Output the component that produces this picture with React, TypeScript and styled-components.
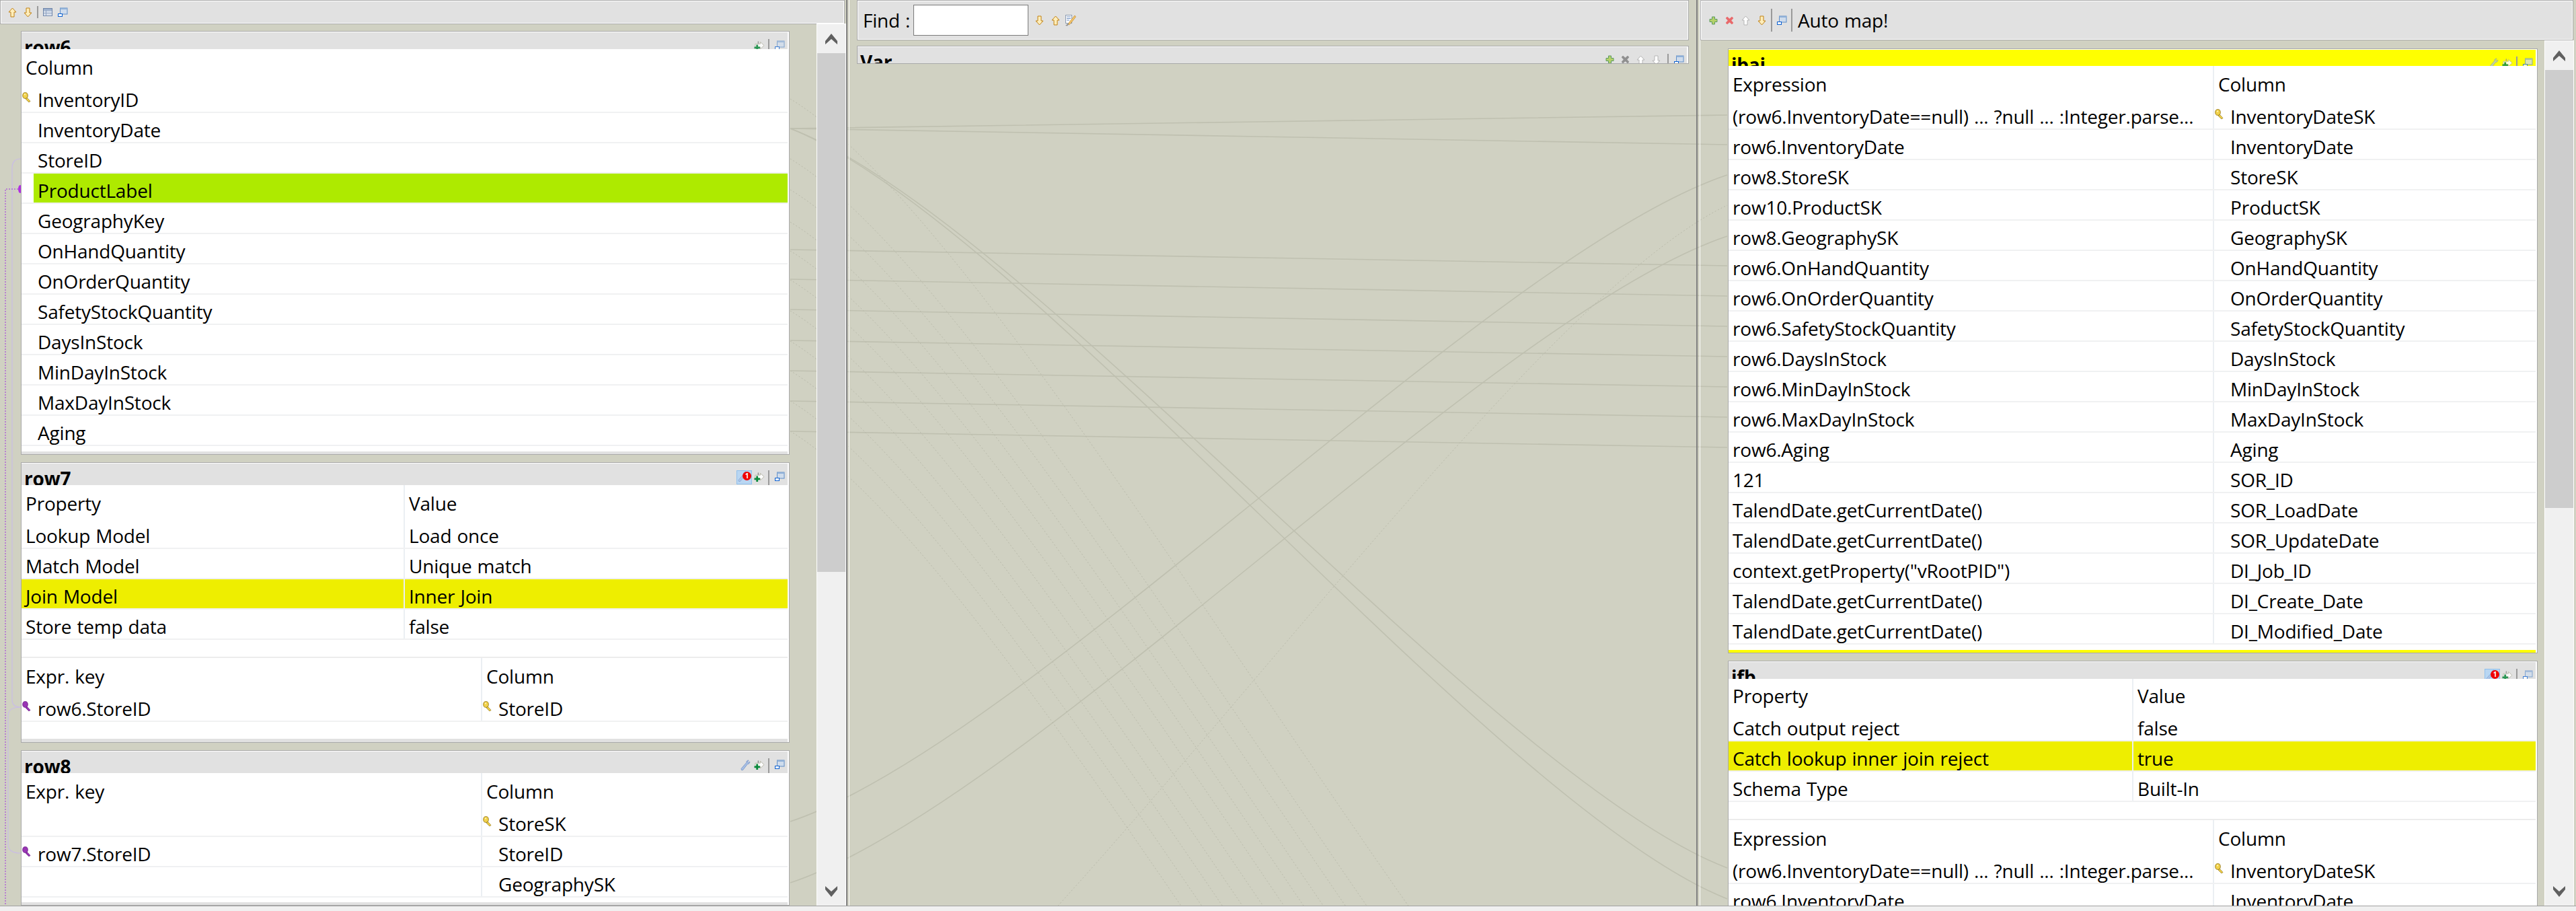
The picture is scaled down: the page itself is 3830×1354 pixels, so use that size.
import { Fragment, ReactNode } from 'react';
import styled, { createGlobalStyle } from 'styled-components';

const GlobalStyle = createGlobalStyle`
  html, body { margin: 0; padding: 0; background: #f0f0f0; }
  * { box-sizing: border-box; }
  body { font-family: "Open Sans", "Noto Sans", sans-serif; color: #000; }
`;

const Root = styled.div`
  width: 3830px;
  height: 1354px;
  overflow: hidden;
  background: #f0f0f0;
`;

const Workspace = styled.div`
  position: relative;
  display: flex;
  width: 100%;
  height: 1347px;
  overflow: hidden;
  background: #d0d1c2;
  border-bottom: 1px solid #a0a0a0;
`;

const Links = styled.svg`
  position: absolute;
  top: 0;
  left: 0;
  z-index: 0;
`;

const Pane = styled.div<{ $w: number }>`
  position: relative;
  z-index: 1;
  display: flex;
  flex-direction: column;
  flex: none;
  width: ${(p) => p.$w}px;
  height: 100%;
  overflow: hidden;
`;

const Sash = styled.div<{ $w: number }>`
  position: relative;
  z-index: 1;
  flex: none;
  width: ${(p) => p.$w}px;
  border-left: 2px solid #808080;
  border-right: 1px solid #fff;
`;

const Toolbar = styled.div<{ $h: number; $mr?: number }>`
  display: flex;
  flex: none;
  align-items: center;
  height: ${(p) => p.$h}px;
  margin-right: ${(p) => p.$mr ?? 0}px;
  padding-left: 6px;
  background: #e1e1e1;
  border: 1px solid #a9a9a9;
  box-shadow: inset 0 0 0 1px #fff;
`;

const ToolButton = styled.span<{ $w?: number }>`
  display: flex;
  flex: none;
  align-items: center;
  justify-content: center;
  width: ${(p) => p.$w ?? 24}px;
`;

const Divider = styled.span<{ $h?: number }>`
  flex: none;
  width: 2px;
  height: ${(p) => p.$h ?? 34}px;
  margin: 0 2px;
  background: #9a9a9a;
`;

const ToolLabel = styled.span`
  margin-left: 6px;
  font-size: 28px;
  letter-spacing: -0.2px;
  word-spacing: 1px;
  white-space: nowrap;
`;

const FindLabel = styled(ToolLabel)`
  width: 75px;
  margin-left: 2px;
`;

const FindInput = styled.input`
  flex: none;
  width: 171px;
  height: 46px;
  margin-right: 4px;
  background: #fff;
  border: 1px solid #7a7a7a;
  outline: none;
`;

const Body = styled.div<{ $mr?: number; $mt?: number }>`
  display: flex;
  flex: 1;
  min-height: 0;
  margin-top: ${(p) => p.$mt ?? 0}px;
  margin-right: ${(p) => p.$mr ?? 0}px;
`;

const Stack = styled.div<{ $pl: number; $pt: number; $w: number }>`
  display: flex;
  flex: none;
  flex-direction: column;
  gap: 11px;
  width: ${(p) => p.$w}px;
  padding: ${(p) => p.$pt}px 0 0 ${(p) => p.$pl}px;
  overflow: hidden;
`;

const Panel = styled.section<{ $w: string }>`
  flex: none;
  width: ${(p) => p.$w};
  padding: 1px 2px 0 0;
  background: #fff;
  border: 1px solid #a9a9a9;
`;

const PanelHead = styled.header<{ $h: number; $bg?: string }>`
  display: flex;
  justify-content: space-between;
  height: ${(p) => p.$h}px;
  overflow: hidden;
  background: ${(p) => p.$bg ?? '#e1e1e1'};
`;

const PanelTitle = styled.h3`
  margin: 0;
  padding: 6px 0 0 4px;
  font-size: 28px;
  font-weight: 700;
  line-height: 32px;
  letter-spacing: -0.2px;
`;

const HeadTools = styled.div`
  display: flex;
  flex: none;
  align-items: flex-start;
  height: 40px;
  padding: 10px 4px 0 0;
`;

const HeadSlot = styled.span<{ $w?: number }>`
  display: flex;
  flex: none;
  justify-content: center;
  width: ${(p) => p.$w ?? 22}px;
  padding-top: 2px;
`;

const HeadRule = styled.span`
  flex: none;
  width: 2px;
  height: 24px;
  margin: 0 8px 0 5px;
  background: #9a9a9a;
`;

const IssueBox = styled.span`
  position: relative;
  display: block;
  flex: none;
  width: 23px;
  height: 21px;
  margin-right: 3px;
  background: #b9d6f2;
  border: 1px solid #90c0ec;
`;

const IssueCount = styled.span`
  position: absolute;
  top: 1px;
  right: 0;
  width: 13px;
  height: 13px;
  font-size: 10px;
  font-weight: 700;
  line-height: 13px;
  text-align: center;
  color: #fff;
  background: #f00000;
  border-radius: 50%;
`;

const Row = styled.div<{ $cols: string; $h?: number; $head?: boolean }>`
  display: grid;
  grid-template-columns: ${(p) => p.$cols};
  height: ${(p) => p.$h ?? 45}px;
  border-bottom: ${(p) => (p.$head ? 'none' : '2px solid #f0f1f2')};
`;

const Cell = styled.div<{ $split?: boolean }>`
  display: flex;
  min-width: 0;
  border-left: ${(p) => (p.$split ? '2px solid #ebeff3' : 'none')};
`;

const KeySlot = styled.span`
  display: flex;
  flex: none;
  align-items: center;
  width: 18px;
  padding-left: 1px;
`;

const CellText = styled.span<{ $fill?: string; $pt: number }>`
  flex: 1;
  min-width: 0;
  padding: ${(p) => p.$pt}px 0 0 6px;
  font-size: 28px;
  line-height: 35px;
  letter-spacing: -0.2px;
  word-spacing: 1px;
  white-space: nowrap;
  overflow: hidden;
  background: ${(p) => p.$fill ?? 'transparent'};
`;

const Spacer = styled.div<{ $h: number }>`
  height: ${(p) => p.$h}px;
`;

const Band = styled.div<{ $h: number; $bg?: string }>`
  height: ${(p) => p.$h}px;
  background: ${(p) => p.$bg ?? '#e1e1e1'};
`;

const Track = styled.div`
  display: flex;
  flex: none;
  flex-direction: column;
  width: 42px;
  margin-left: 1px;
  background: #f0f0f0;
  box-shadow: 0 0 0 1px #fff;
`;

const TrackButton = styled.div`
  display: flex;
  flex: none;
  align-items: center;
  justify-content: center;
  height: 43px;
`;

const Thumb = styled.div<{ $h: number }>`
  flex: none;
  height: ${(p) => p.$h}px;
  background: #cdcdcd;
`;

const TrackRest = styled.div`
  flex: 1;
`;

const Middle = styled.div`
  display: flex;
  flex-direction: column;
  gap: 8px;
  padding: 0 11px;
`;

/* ---------- icons ---------- */

const tones = {
  orange: { fill: '#ffeebb', line: '#c08010' },
  pale: { fill: '#ffffff', line: '#b4b4b4' },
};

type Tone = keyof typeof tones;

const ArrowUp = ({ tone = 'orange' }: { tone?: Tone }) => (
  <svg width="13" height="15" viewBox="0 0 13 15">
    <path d="M6.5 1 12 7H9v7H4V7H1z" fill={tones[tone].fill} stroke={tones[tone].line} />
  </svg>
);

const ArrowDown = ({ tone = 'orange' }: { tone?: Tone }) => (
  <svg width="13" height="15" viewBox="0 0 13 15">
    <path d="M4 1h5v7h3l-5.500 6L1 8h3z" fill={tones[tone].fill} stroke={tones[tone].line} />
  </svg>
);

const Plus = () => (
  <svg width="13" height="13" viewBox="0 0 13 13">
    <path d="M4.500 1h4v3.500h3.500v4H8.500V12h-4V8.500H1v-4h3.500z" fill="#b5d168" stroke="#5d9a63" />
  </svg>
);

const Cross = ({ color = '#e9686a' }: { color?: string }) => (
  <svg width="13" height="13" viewBox="0 0 13 13">
    <path d="M1 3l2-2 3.500 3L10 1l2 2-3 3.500 3 3.500-2 2-3.500-3L3 12l-2-2 3-3.500z" fill={color} stroke={color} strokeWidth="0.6" />
  </svg>
);

const WindowIcon = ({ dim }: { dim?: boolean }) => (
  <svg width="15" height="14" viewBox="0 0 15 14" opacity={dim ? 0.75 : 1}>
    <rect x="3.500" y="1" width="10.500" height="9" fill="#cfdcec" stroke="#5f8ec8" />
    <rect x="3.500" y="1" width="10.500" height="2" fill="#8fb0d8" />
    <rect x="0.500" y="9.500" width="6" height="4" fill="#fff" stroke="#0b5fd0" />
  </svg>
);

const TableIcon = () => (
  <svg width="14" height="12" viewBox="0 0 14 12">
    <rect x="0.500" y="0.500" width="13" height="11" fill="#e8edf5" stroke="#6d84a8" />
    <path d="M1 3.500h12M1 6h12M1 8.500h12M4.500 3.500v8" stroke="#8fa3c2" fill="none" />
    <rect x="1" y="1" width="12" height="2" fill="#9fb2cf" />
  </svg>
);

const FindIcon = () => (
  <svg width="17" height="17" viewBox="0 0 17 17">
    <rect x="1.500" y="0.500" width="9" height="12" fill="#fff" stroke="#8a9ab0" />
    <path d="M3 3h6M3 5.500h6M3 8h4" stroke="#6f8fc0" />
    <path d="M15 1l1.500 2-7 9-3 3-1.500-1 2.500-4z" fill="#f3c46a" stroke="#c08a30" strokeWidth="0.7" />
    <path d="M1 16l4-3 1 1-2 2.500z" fill="#8a8a8a" />
  </svg>
);

const Wrench = ({ dim }: { dim?: boolean }) => (
  <svg width="16" height="17" viewBox="0 0 16 17" opacity={dim ? 0.7 : 1}>
    <path d="M13 1c-2 0-3.500 1.500-3.200 3.500L2 13.500 2.500 15.500 4.500 15.500 11.500 6.500C13.500 6.800 15 5 14.800 3L12.800 4.700 11.500 3.500z" fill="#a9c0e4" stroke="#6f8fc8" strokeWidth="0.8" />
  </svg>
);

const AddArrow = ({ dim }: { dim?: boolean }) => (
  <svg width="17" height="17" viewBox="0 0 17 17" opacity={dim ? 0.85 : 1}>
    <path d="M6 1h1.500v4H6z" fill="#8f8f8f" />
    <path d="M2 5h8V2l6 5.500-6 5.500V10H2z" fill="#fff" stroke="#b4b4a4" />
    <path d="M3.500 6.500h3v3h3v3h-3v3h-3v-3h-3v-3h3z" fill="#0b8a3c" />
  </svg>
);

const Key = ({ color = 'gold' }: { color?: 'gold' | 'purple' }) => {
  const fill = color === 'gold' ? '#f2d24a' : '#9a35b5';
  const line = color === 'gold' ? '#8a6d10' : '#6a1f85';
  return (
    <svg width="15" height="15" viewBox="0 0 15 15">
      <path d="M5 10l5 5 2-1.500L7 8z" fill={fill} stroke={line} strokeWidth="0.7" />
      <ellipse cx="4.500" cy="5" rx="3.800" ry="4.400" fill={fill} stroke={line} strokeWidth="0.8" />
      {color === 'gold' && <circle cx="4" cy="3.500" r="1" fill="#fff8d0" />}
    </svg>
  );
};

const Chevron = ({ down }: { down?: boolean }) => (
  <svg width="18" height="16" viewBox="0 0 18 16">
    <path d={down ? 'M0 0l9 8 9-8v5L9 16 0 5z' : 'M9 0l9 11v5L9 8l-9 8v-5z'} fill="#606060" />
  </svg>
);

/* ---------- tables ---------- */

type CellData = { text: string; key?: 'gold' | 'purple'; slot?: boolean };
type RowData = { cells: CellData[]; fill?: string };

const GREEN = '#aeea00';
const YELLOW = '#eeee00';

const c = (text: string): CellData => ({ text });
const s = (text: string): CellData => ({ text, slot: true });
const gold = (text: string): CellData => ({ text, slot: true, key: 'gold' });
const purple = (text: string): CellData => ({ text, slot: true, key: 'purple' });

const DataTable = ({
  cols,
  head,
  rows,
  headH = 50,
}: {
  cols: string;
  head: string[];
  rows: RowData[];
  headH?: number;
}) => (
  <div>
    <Row $cols={cols} $h={headH} $head>
      {head.map((h, i) => (
        <Cell key={h} $split={i > 0}>
          <CellText $pt={headH - 40}>{h}</CellText>
        </Cell>
      ))}
    </Row>
    {rows.map((row, r) => (
      <Row key={r} $cols={cols}>
        {row.cells.map((cell, i) => (
          <Cell key={i} $split={i > 0}>
            {cell.slot && <KeySlot>{cell.key && <Key color={cell.key} />}</KeySlot>}
            <CellText $pt={8} $fill={row.fill}>
              {cell.text}
            </CellText>
          </Cell>
        ))}
      </Row>
    ))}
  </div>
);

const row6Rows: RowData[] = [
  { cells: [gold('InventoryID')] },
  { cells: [s('InventoryDate')] },
  { cells: [s('StoreID')] },
  { cells: [s('ProductLabel')], fill: GREEN },
  ...['GeographyKey', 'OnHandQuantity', 'OnOrderQuantity', 'SafetyStockQuantity', 'DaysInStock', 'MinDayInStock', 'MaxDayInStock', 'Aging'].map(
    (t) => ({ cells: [s(t)] }),
  ),
];

const row7Props: RowData[] = [
  { cells: [c('Lookup Model'), c('Load once')] },
  { cells: [c('Match Model'), c('Unique match')] },
  { cells: [c('Join Model'), c('Inner Join')], fill: YELLOW },
  { cells: [c('Store temp data'), c('false')] },
];

const longExpr = '(row6.InventoryDate==null) ... ?null ... :Integer.parse...';

const ibaiRows: RowData[] = [
  { cells: [c(longExpr), gold('InventoryDateSK')] },
  ...[
    ['row6.InventoryDate', 'InventoryDate'],
    ['row8.StoreSK', 'StoreSK'],
    ['row10.ProductSK', 'ProductSK'],
    ['row8.GeographySK', 'GeographySK'],
    ['row6.OnHandQuantity', 'OnHandQuantity'],
    ['row6.OnOrderQuantity', 'OnOrderQuantity'],
    ['row6.SafetyStockQuantity', 'SafetyStockQuantity'],
    ['row6.DaysInStock', 'DaysInStock'],
    ['row6.MinDayInStock', 'MinDayInStock'],
    ['row6.MaxDayInStock', 'MaxDayInStock'],
    ['row6.Aging', 'Aging'],
    ['121', 'SOR_ID'],
    ['TalendDate.getCurrentDate()', 'SOR_LoadDate'],
    ['TalendDate.getCurrentDate()', 'SOR_UpdateDate'],
    ['context.getProperty("vRootPID")', 'DI_Job_ID'],
    ['TalendDate.getCurrentDate()', 'DI_Create_Date'],
    ['TalendDate.getCurrentDate()', 'DI_Modified_Date'],
  ].map(([a, b]) => ({ cells: [c(a), s(b)] })),
];

const ifbProps: RowData[] = [
  { cells: [c('Catch output reject'), c('false')] },
  { cells: [c('Catch lookup inner join reject'), c('true')], fill: YELLOW },
  { cells: [c('Schema Type'), c('Built-In')] },
];

/* ---------- connection lines ---------- */

const FROM = 1175;
const TO = 2568;

const curve = (y0: number, y1: number) => {
  const d = TO - FROM;
  const dy = y1 - y0;
  return `M${FROM} ${y0}C${FROM + d * 0.25} ${y0 + dy * 0.12} ${FROM + d * 0.75} ${y0 + dy * 0.88} ${TO} ${y1}`;
};

const solid: [number, number][] = [
  [191, 171],
  [191, 215],
  [371, 395],
  [415, 440],
  [460, 485],
  [506, 530],
  [551, 575],
  [596, 620],
  [641, 665],
  [191, 1290],
  [191, 1336],
  [1221, 260],
  [1312, 351],
];

const dashedSources = [147, 236, 282, 330, 373, 416, 462, 507, 551, 596, 641];

const LinkLayer = () => (
  <Links width="3830" height="1347" viewBox="0 0 3830 1347" fill="none">
    {solid.map(([a, b]) => (
      <path key={`${a}-${b}`} d={curve(a, b)} stroke="#bfc0b0" strokeWidth="1.6" />
    ))}
    {dashedSources.map((a) => (
      <path key={a} d={curve(a, a + 1750)} stroke="#b9baaa" strokeWidth="1" strokeDasharray="2 3" />
    ))}
    <path d={curve(1700, 305)} stroke="#b9baaa" strokeWidth="1" strokeDasharray="2 3" />
    <path d="M31 236Q18 236 18 250V1040Q18 1051 31 1051" stroke="#c9bce6" strokeWidth="1.2" />
    <path d="M31 1051Q12 1051 12 1064V1255Q12 1268 31 1268" stroke="#c9bce6" strokeWidth="1.2" />
    <path d="M31 281H8V1347" stroke="#a030e0" strokeWidth="1" strokeDasharray="2 2" />
    <ellipse cx="30" cy="281" rx="3" ry="6" fill="#b030e0" />
  </Links>
);

const HeadIcons = ({ lead, dim }: { lead?: ReactNode; dim?: boolean }) => (
  <HeadTools>
    {lead}
    <HeadSlot $w={16}>
      <AddArrow dim={dim} />
    </HeadSlot>
    <HeadRule />
    <HeadSlot $w={15}>
      <WindowIcon dim={dim} />
    </HeadSlot>
  </HeadTools>
);

const IssueIcon = () => (
  <IssueBox>
    <Wrench dim />
    <IssueCount>1</IssueCount>
  </IssueBox>
);

const WrenchSlot = ({ dim }: { dim?: boolean }) => (
  <HeadSlot $w={26}>
    <Wrench dim={dim} />
  </HeadSlot>
);

const ScrollBar = ({ thumb }: { thumb: number }) => (
  <Track>
    <TrackButton>
      <Chevron />
    </TrackButton>
    <Thumb $h={thumb} />
    <TrackRest />
    <TrackButton>
      <Chevron down />
    </TrackButton>
  </Track>
);

const LEFT_PROP = '568px 1fr';
const LEFT_EXPR = '683px 1fr';
const RIGHT_PROP = '600px 1fr';
const RIGHT_EXPR = '720px 1fr';

export default function App() {
  return (
    <Fragment>
      <GlobalStyle />
      <Root>
        <Workspace>
          <LinkLayer />

          <Pane $w={1258}>
            <Toolbar $h={36} $mr={2}>
              <ToolButton $w={23}>
                <ArrowUp />
              </ToolButton>
              <ToolButton $w={23}>
                <ArrowDown />
              </ToolButton>
              <Divider $h={18} />
              <ToolButton $w={23}>
                <TableIcon />
              </ToolButton>
              <ToolButton $w={23}>
                <WindowIcon />
              </ToolButton>
            </Toolbar>
            <Body $mr={2}>
              <Stack $pl={31} $pt={10} $w={1214}>
                <Panel $w="1143px">
                  <PanelHead $h={25}>
                    <PanelTitle>row6</PanelTitle>
                    <HeadIcons dim />
                  </PanelHead>
                  <DataTable cols="1fr" head={['Column']} rows={row6Rows} />
                  <Spacer $h={8} />
                  <Band $h={4} />
                </Panel>
                <Panel $w="1143px">
                  <PanelHead $h={32}>
                    <PanelTitle>row7</PanelTitle>
                    <HeadIcons lead={<IssueIcon />} />
                  </PanelHead>
                  <DataTable cols={LEFT_PROP} head={['Property', 'Value']} rows={row7Props} />
                  <Spacer $h={25} />
                  <Band $h={2} $bg="#ececec" />
                  <DataTable
                    cols={LEFT_EXPR}
                    head={['Expr. key', 'Column']}
                    rows={[{ cells: [purple('row6.StoreID'), gold('StoreID')] }]}
                  />
                  <Spacer $h={25} />
                  <Band $h={5} />
                </Panel>
                <Panel $w="1143px">
                  <PanelHead $h={32}>
                    <PanelTitle>row8</PanelTitle>
                    <HeadIcons lead={<WrenchSlot />} />
                  </PanelHead>
                  <DataTable
                    cols={LEFT_EXPR}
                    head={['Expr. key', 'Column']}
                    rows={[
                      { cells: [c(''), gold('StoreSK')] },
                      { cells: [purple('row7.StoreID'), s('StoreID')] },
                      { cells: [c(''), s('GeographySK')] },
                    ]}
                  />
                  <Spacer $h={7} />
                  <Band $h={4} />
                </Panel>
              </Stack>
              <ScrollBar thumb={771} />
            </Body>
          </Pane>

          <Sash $w={5} />

          <Pane $w={1259}>
            <Middle>
              <Toolbar $h={60}>
                <FindLabel>Find :</FindLabel>
                <FindInput aria-label="Find" />
                <ToolButton>
                  <ArrowDown />
                </ToolButton>
                <ToolButton>
                  <ArrowUp />
                </ToolButton>
                <ToolButton $w={20}>
                  <FindIcon />
                </ToolButton>
              </Toolbar>
              <Panel $w="100%">
                <PanelHead $h={24}>
                  <PanelTitle>Var</PanelTitle>
                  <HeadTools>
                    <HeadSlot $w={23}>
                      <Plus />
                    </HeadSlot>
                    <HeadSlot $w={23}>
                      <Cross color="#8f8f8f" />
                    </HeadSlot>
                    <HeadSlot $w={23}>
                      <ArrowUp tone="pale" />
                    </HeadSlot>
                    <HeadSlot $w={23}>
                      <ArrowDown tone="pale" />
                    </HeadSlot>
                    <HeadRule />
                    <HeadSlot $w={15}>
                      <WindowIcon />
                    </HeadSlot>
                  </HeadTools>
                </PanelHead>
              </Panel>
            </Middle>
          </Pane>

          <Sash $w={6} />

          <Pane $w={1302}>
            <Toolbar $h={60} $mr={4}>
              <ToolButton>
                <Plus />
              </ToolButton>
              <ToolButton>
                <Cross />
              </ToolButton>
              <ToolButton>
                <ArrowUp tone="pale" />
              </ToolButton>
              <ToolButton>
                <ArrowDown />
              </ToolButton>
              <Divider />
              <ToolButton>
                <WindowIcon />
              </ToolButton>
              <Divider />
              <ToolLabel>Auto map!</ToolLabel>
            </Toolbar>
            <Body $mr={4} $mt={1}>
              <Stack $pl={41} $pt={11} $w={1255}>
                <Panel $w="1204px">
                  <PanelHead $h={24} $bg="#ffff00">
                    <PanelTitle>ibai</PanelTitle>
                    <HeadIcons lead={<WrenchSlot dim />} dim />
                  </PanelHead>
                  <DataTable cols={RIGHT_EXPR} head={['Expression', 'Column']} rows={ibaiRows} />
                  <Spacer $h={8} />
                  <Band $h={4} $bg="#ffff00" />
                </Panel>
                <Panel $w="1204px">
                  <PanelHead $h={25}>
                    <PanelTitle>ifb</PanelTitle>
                    <HeadIcons lead={<IssueIcon />} dim />
                  </PanelHead>
                  <DataTable cols={RIGHT_PROP} head={['Property', 'Value']} rows={ifbProps} headH={48} />
                  <Spacer $h={25} />
                  <Band $h={2} $bg="#ececec" />
                  <DataTable
                    cols={RIGHT_EXPR}
                    head={['Expression', 'Column']}
                    rows={[
                      { cells: [c(longExpr), gold('InventoryDateSK')] },
                      { cells: [c('row6.InventoryDate'), s('InventoryDate')] },
                    ]}
                  />
                </Panel>
              </Stack>
              <ScrollBar thumb={651} />
            </Body>
          </Pane>
        </Workspace>
      </Root>
    </Fragment>
  );
}
